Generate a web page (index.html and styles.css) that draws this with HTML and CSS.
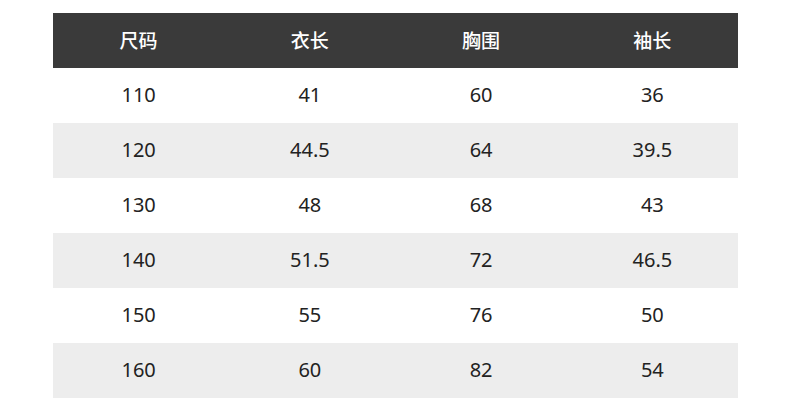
FILE: index.html
```html
<!DOCTYPE html>
<html lang="zh">
<head>
<meta charset="utf-8">
<link rel="stylesheet" href="styles.css">
</head>
<body>
<div class="table">
  <div class="row head"><div>尺码</div><div>衣长</div><div>胸围</div><div>袖长</div></div>
  <div class="row"><div>110</div><div>41</div><div>60</div><div>36</div></div>
  <div class="row alt"><div>120</div><div>44.5</div><div>64</div><div>39.5</div></div>
  <div class="row"><div>130</div><div>48</div><div>68</div><div>43</div></div>
  <div class="row alt"><div>140</div><div>51.5</div><div>72</div><div>46.5</div></div>
  <div class="row"><div>150</div><div>55</div><div>76</div><div>50</div></div>
  <div class="row alt"><div>160</div><div>60</div><div>82</div><div>54</div></div>
</div>
</body>
</html>
```
FILE: styles.css
```css
html, body { margin: 0; padding: 0; background: #fff; }
body { padding: 13px 0 0 53px; font-family: "Noto Sans", "Noto Sans CJK SC", sans-serif; }
.table { width: 685px; }
.row { display: grid; grid-template-columns: repeat(4, 1fr); height: 55px; box-sizing: border-box; padding-bottom: 3px; align-items: center; text-align: center; font-size: 20px; color: #222; }
.row.alt { background: #ededed; }
.row.head { background: #3a3a3a; color: #fff; font-size: 19px; font-weight: 500; font-family: "Noto Sans CJK SC", sans-serif; }
```
